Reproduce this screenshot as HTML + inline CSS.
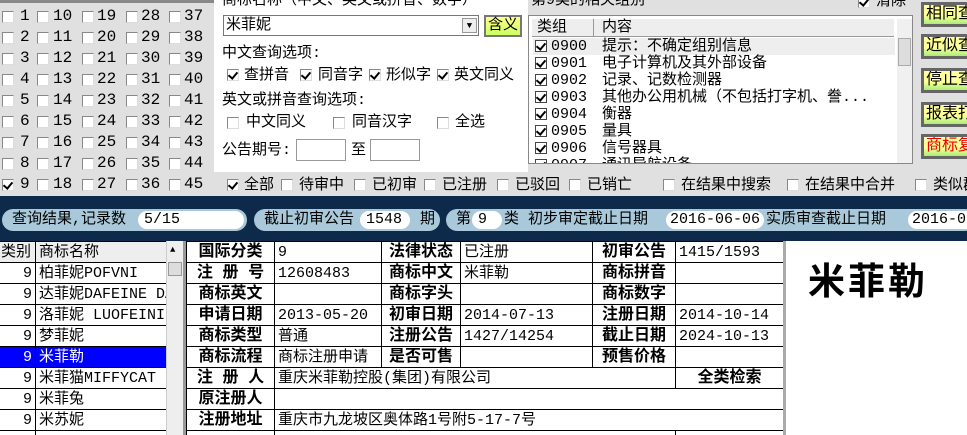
<!DOCTYPE html><html><head><meta charset="utf-8"><style>
*{margin:0;padding:0;box-sizing:border-box}
html,body{width:967px;height:435px;overflow:hidden}
body{background:#e0e0e0;font-family:"Liberation Mono","WenQuanYi Zen Hei","Noto Sans CJK SC",monospace;font-size:15px;color:#000;position:relative}
.a{position:absolute;white-space:nowrap;line-height:17px}
.cb{position:absolute;width:12px;height:12px;border:1px solid #888;background:#fff;border-right-color:#ddd;border-bottom-color:#ddd}
.ck::after{content:"";position:absolute;left:2px;top:0px;width:4px;height:7px;border:solid #000;border-width:0 2px 2px 0;transform:rotate(40deg)}
.btn{position:absolute;left:921px;width:50px;height:25px;border:3px solid #666;background:linear-gradient(#ffff99,#ffff99 55%,#aaee77);font-size:16px;line-height:19px;padding-left:2px;white-space:nowrap;overflow:hidden}
.pill{position:absolute;top:209px;height:22px;background:#a9c9da;border-radius:11px;line-height:22px;padding-left:10px;font-size:15px;white-space:nowrap}
.in{position:absolute;top:2px;height:18px;background:#fff;border-radius:9px;line-height:18px;padding-left:6px;white-space:nowrap;overflow:hidden}
table{border-collapse:collapse;position:absolute;table-layout:fixed}
td{border:1px solid #000;height:21px;line-height:19px;padding:0 3px;white-space:nowrap;overflow:hidden}
.l{font-weight:bold;text-align:center;font-size:16px}
</style></head><body>
<div class="a" style="left:0;top:0;width:214px;height:3px;background:#888"></div>
<div id="grid"></div>
<div style="position:absolute;left:214px;top:0;width:314px;height:172px;background:#fff"></div>
<div class="a" style="left:222px;top:-8px">商标名称（中文、英文或拼音、数字）</div>
<div style="position:absolute;left:223px;top:15px;width:256px;height:21px;border:1px solid #777;background:#fff"><span class="a" style="left:2px;top:1px">米菲妮</span><div style="position:absolute;right:1px;top:2px;width:15px;height:15px;border:1px solid #999;background:#eee;font-size:9px;text-align:center;line-height:14px">▼</div></div>
<div style="position:absolute;left:484px;top:15px;width:38px;height:22px;border:2px solid #777;background:linear-gradient(#ffff88,#ccff66);text-align:center;line-height:18px">含义</div>
<div class="a" style="left:222px;top:45px">中文查询选项:</div>
<div class="cb ck" style="left:227px;top:69px"></div><div class="a" style="left:244px;top:67px">查拼音</div>
<div class="cb ck" style="left:300px;top:69px"></div><div class="a" style="left:318px;top:67px">同音字</div>
<div class="cb ck" style="left:369px;top:69px"></div><div class="a" style="left:386px;top:67px">形似字</div>
<div class="cb ck" style="left:437px;top:69px"></div><div class="a" style="left:454px;top:67px">英文同义</div>
<div class="a" style="left:222px;top:92px">英文或拼音查询选项:</div>
<div class="cb" style="left:227px;top:117px"></div><div class="a" style="left:246px;top:114px">中文同义</div>
<div class="cb" style="left:333px;top:117px"></div><div class="a" style="left:352px;top:114px">同音汉字</div>
<div class="cb" style="left:437px;top:117px"></div><div class="a" style="left:455px;top:114px">全选</div>
<div class="a" style="left:222px;top:142px">公告期号:</div>
<div style="position:absolute;left:296px;top:139px;width:50px;height:22px;border:1px solid #999;background:#fff"></div>
<div class="a" style="left:351px;top:142px">至</div>
<div style="position:absolute;left:370px;top:139px;width:50px;height:22px;border:1px solid #999;background:#fff"></div>
<div class="a" style="left:531px;top:-8px">第9类的相关组别</div>
<div class="cb ck" style="left:858px;top:-4px"></div><div class="a" style="left:876px;top:-7px">清除</div>
<div style="position:absolute;left:528px;top:15px;width:385px;height:149px;border:1px solid #888;background:#fff;overflow:hidden">
<div style="position:absolute;left:3px;top:3px;width:362px;height:18px;background:#eee;border-bottom:1px solid #999"></div>
<div style="position:absolute;left:64px;top:3px;width:1px;height:18px;background:#999"></div>
<div class="a" style="left:8px;top:3px">类组</div><div class="a" style="left:73px;top:3px">内容</div>
<div style="position:absolute;left:4px;top:22px;width:362px;height:17px;background:#eee"></div>
<div id="grp"></div>
<div style="position:absolute;left:368px;top:3px;width:15px;height:144px;background:#f0f0f0"></div>
<div style="position:absolute;left:369px;top:22px;width:13px;height:28px;background:#ddd;border:1px solid #aaa"></div>
</div>
<div class="btn" style="top:2px">相同查</div>
<div class="btn" style="top:34px">近似查</div>
<div class="btn" style="top:68px">停止查</div>
<div class="btn" style="top:102px">报表打</div>
<div class="btn" style="top:134px;color:#e00">商标复</div>
<div class="cb ck" style="left:227px;top:179px"></div><div class="a" style="left:244px;top:177px">全部</div>
<div class="cb" style="left:281px;top:179px"></div><div class="a" style="left:299px;top:177px">待审中</div>
<div class="cb" style="left:354px;top:179px"></div><div class="a" style="left:372px;top:177px">已初审</div>
<div class="cb" style="left:424px;top:179px"></div><div class="a" style="left:442px;top:177px">已注册</div>
<div class="cb" style="left:497px;top:179px"></div><div class="a" style="left:515px;top:177px">已驳回</div>
<div class="cb" style="left:569px;top:179px"></div><div class="a" style="left:587px;top:177px">已销亡</div>
<div class="cb" style="left:663px;top:179px"></div><div class="a" style="left:681px;top:177px">在结果中搜索</div>
<div class="cb" style="left:787px;top:179px"></div><div class="a" style="left:805px;top:177px">在结果中合并</div>
<div class="cb" style="left:915px;top:179px"></div><div class="a" style="left:933px;top:177px">类似群</div>
<div style="position:absolute;left:0;top:196px;width:967px;height:45px;background:#0e2a4a"></div>
<div class="pill" style="left:2px;width:245px">查询结果,记录数<div class="in" style="left:136px;width:106px">5/15</div></div>
<div class="pill" style="left:254px;width:186px">截止初审公告<div class="in" style="left:106px;width:50px">1548</div><span class="a" style="left:166px;top:2px">期</span></div>
<div class="pill" style="left:446px;width:530px">第<div class="in" style="left:26px;width:30px">9</div><span class="a" style="left:58px;top:2px">类 初步审定截止日期</span><div class="in" style="left:220px;width:98px;padding-left:4px">2016-06-06</div><span class="a" style="left:320px;top:2px">实质审查截止日期</span><div class="in" style="left:462px;width:80px;padding-left:4px">2016-06</div></div>
<div style="position:absolute;left:0;top:241px;width:183px;height:194px;background:#fff"></div>
<table style="left:-1px;top:241px;width:168px;background:#fff">
<colgroup><col style="width:36px"><col></colgroup>
<tr style="background:#eee"><td style="padding:0 1px">类别</td><td>商标名称</td></tr>
<tr><td style="text-align:right">9</td><td>柏菲妮POFVNI</td></tr>
<tr><td style="text-align:right">9</td><td>达菲妮DAFEINE DA</td></tr>
<tr><td style="text-align:right">9</td><td>洛菲妮 LUOFEINI</td></tr>
<tr><td style="text-align:right">9</td><td>梦菲妮</td></tr>
<tr style="background:#0000ff;color:#fff"><td style="text-align:right">9</td><td>米菲勒</td></tr>
<tr><td style="text-align:right">9</td><td>米菲猫MIFFYCAT</td></tr>
<tr><td style="text-align:right">9</td><td>米菲兔</td></tr>
<tr><td style="text-align:right">9</td><td>米苏妮</td></tr>
<tr><td></td><td></td></tr>
</table>
<div style="position:absolute;left:166px;top:241px;width:17px;height:194px;background:#eee;border-left:1px solid #ccc"></div>
<div style="position:absolute;left:168px;top:262px;width:14px;height:14px;background:#ddd;border:1px solid #999"></div>
<div class="a" style="left:170px;top:242px;font-size:9px">▲</div>
<div style="position:absolute;left:183px;top:241px;width:603px;height:194px;background:#fff;border-left:3px solid #999"></div>
<table style="left:186px;top:241px;width:597px;background:#fff">
<colgroup><col style="width:88px"><col style="width:107px"><col style="width:79px"><col style="width:132px"><col style="width:83px"><col style="width:108px"></colgroup>
<tr><td class="l">国际分类</td><td>9</td><td class="l">法律状态</td><td>已注册</td><td class="l">初审公告</td><td>1415/1593</td></tr>
<tr><td class="l">注 册 号</td><td>12608483</td><td class="l">商标中文</td><td>米菲勒</td><td class="l">商标拼音</td><td></td></tr>
<tr><td class="l">商标英文</td><td></td><td class="l">商标字头</td><td></td><td class="l">商标数字</td><td></td></tr>
<tr><td class="l">申请日期</td><td>2013-05-20</td><td class="l">初审日期</td><td>2014-07-13</td><td class="l">注册日期</td><td>2014-10-14</td></tr>
<tr><td class="l">商标类型</td><td>普通</td><td class="l">注册公告</td><td>1427/14254</td><td class="l">截止日期</td><td>2024-10-13</td></tr>
<tr><td class="l">商标流程</td><td>商标注册申请</td><td class="l">是否可售</td><td></td><td class="l">预售价格</td><td></td></tr>
<tr><td class="l">注 册 人</td><td colspan="4">重庆米菲勒控股(集团)有限公司</td><td class="l">全类检索</td></tr>
<tr><td class="l">原注册人</td><td colspan="5"></td></tr>
<tr><td class="l">注册地址</td><td colspan="5">重庆市九龙坡区奥体路1号附5-17-7号</td></tr>
<tr><td class="l"></td><td colspan="4"></td><td></td></tr>
</table>
<div style="position:absolute;left:783px;top:241px;width:3px;height:194px;background:#aaa"></div>
<div style="position:absolute;left:786px;top:241px;width:181px;height:194px;background:#fff"></div>
<div class="a" style="left:808px;top:256px;font-size:37px;line-height:44px;font-weight:bold;letter-spacing:3px;font-family:'Noto Sans CJK SC',sans-serif">米菲勒</div>
<script>
var g='',xs=[[0,20],[35,53],[80,97],[124,141],[167,184]];
for(var c=0;c<5;c++)for(var r=0;r<9;r++){var n=c*9+r+1,y=9+r*21;
g+='<div class="cb'+(n==9?' ck':'')+'" style="left:'+(xs[c][0]+2)+'px;top:'+(y+2)+'px"></div><div class="a" style="left:'+xs[c][1]+'px;top:'+(y-1)+'px;font-size:16px">'+n+'</div>';}
document.getElementById('grid').innerHTML=g;
var it=[['0900','提示：不确定组别信息'],['0901','电子计算机及其外部设备'],['0902','记录、记数检测器'],['0903','其他办公用机械（不包括打字机、誊...'],['0904','衡器'],['0905','量具'],['0906','信号器具'],['0907','通讯导航设备']],h='';
for(var i=0;i<it.length;i++){var y=22+i*17;
h+='<div class="cb ck" style="left:6px;top:'+(y+2)+'px;border:1px solid #444"></div><div class="a" style="left:22px;top:'+y+'px">'+it[i][0]+'</div><div class="a" style="left:73px;top:'+y+'px">'+it[i][1]+'</div>';}
document.getElementById('grp').innerHTML=h;
</script>
</body></html>
